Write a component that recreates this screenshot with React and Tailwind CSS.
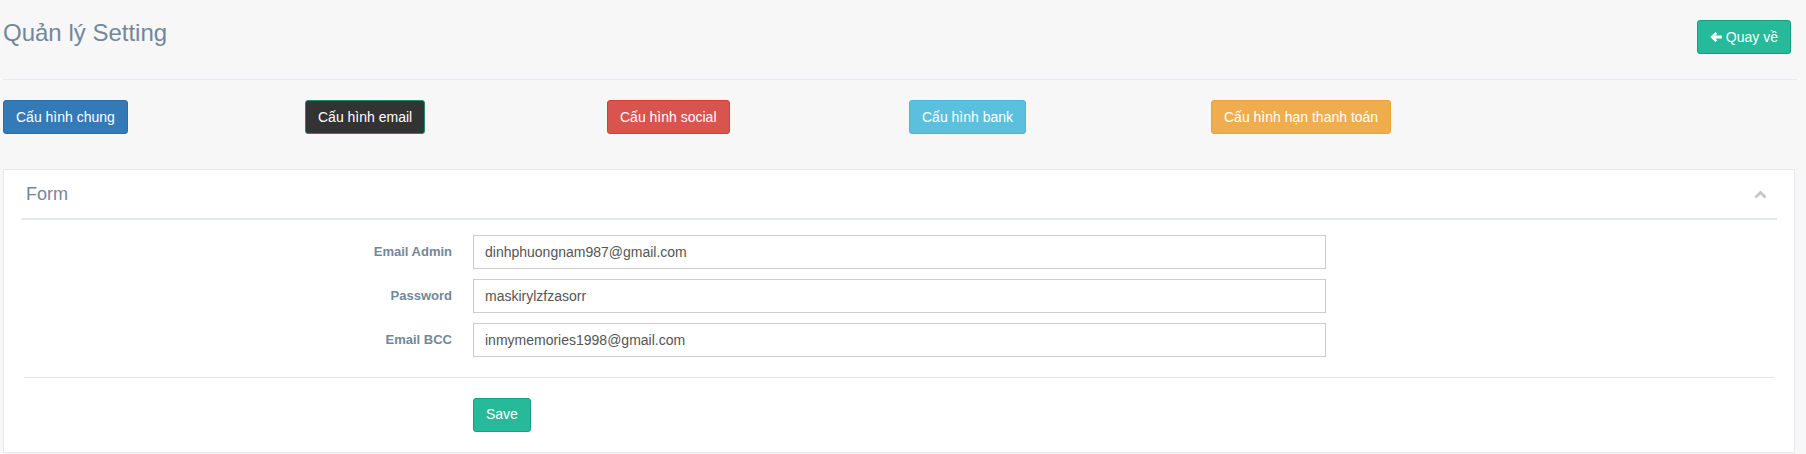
export default function App() {
  const tabs = [
    { label: "Cấu hình chung", cls: "bg-[#337ab7] border-[#2e6da4]" },
    { label: "Cấu hình email", cls: "bg-[#333333] border-[#1e8a70]" },
    { label: "Cấu hình social", cls: "bg-[#d9534f] border-[#d43f3a]" },
    { label: "Cấu hình bank", cls: "bg-[#5bc0de] border-[#46b8da]" },
    { label: "Cấu hình hạn thanh toán", cls: "bg-[#f0ad4e] border-[#eea236]" },
  ];

  const fields = [
    { label: "Email Admin", value: "dinhphuongnam987@gmail.com" },
    { label: "Password", value: "maskirylzfzasorr" },
    { label: "Email BCC", value: "inmymemories1998@gmail.com" },
  ];

  return (
    <div className="min-h-[454px] w-full bg-[#F7F7F7] font-['Liberation_Sans',Arial,sans-serif] text-[#73879C]">
      {/* page title */}
      <div className="flex h-[79px] items-start justify-between pl-[3px] pr-[15px]">
        <h3 className="mt-[20px] text-[24px] leading-[26.4px] text-[#73879C]">Quản lý Setting</h3>
        <button className="mt-[20px] flex h-[34px] items-center gap-[4px] rounded-[3px] border border-[#169F85] bg-[#26B99A] px-[12px] text-[14px] text-white">
          <svg width="12" height="12" viewBox="0 0 12 12" fill="currentColor">
            <path d="M0.3 6 L5.4 0.9 L7.3 2.8 L5.3 4.6 H11.8 V7.4 H5.3 L7.3 9.2 L5.4 11.1 Z" />
          </svg>
          Quay về
        </button>
      </div>
      <div className="ml-[3px] mr-[9px] h-px bg-[#E6E9ED]" />

      {/* tabs */}
      <div className="mt-[20px] grid grid-cols-[repeat(6,302px)] pl-[3px]">
        {tabs.map((t) => (
          <div key={t.label}>
            <button className={`h-[34px] rounded-[3px] border px-[12px] text-[14px] text-white ${t.cls}`}>
              {t.label}
            </button>
          </div>
        ))}
      </div>

      {/* panel */}
      <div className="ml-[3px] mt-[35px] h-[284px] w-[1792px] border border-[#E6E9ED] bg-white px-[17px]">
        <div className="flex items-center justify-between border-b-2 border-[#E6E9ED] pb-[13px] pl-[5px] pt-[15px]">
          <h2 className="text-[18px] leading-[19.8px] text-[#73879C]">Form</h2>
          <svg className="mr-[10px]" width="13" height="9" viewBox="0 0 13 9" fill="none" stroke="#C5C7CB" strokeWidth="2.8">
            <path d="M1.5 7.5 L6.5 2.5 L11.5 7.5" />
          </svg>
        </div>

        <div className="flex flex-col gap-[10px] pt-[15px]">
          {fields.map((f) => (
            <div key={f.label} className="flex items-center">
              <label className="w-[431px] text-right text-[13px] font-bold text-[#73879C]">{f.label}</label>
              <input
                className="ml-[21px] h-[34px] w-[853px] border border-[#ccc] bg-white px-[11px] text-[14px] text-[#555] outline-none"
                defaultValue={f.value}
                readOnly
              />
            </div>
          ))}
        </div>

        <div className="ml-[4px] mr-[3px] mt-[20px] h-px bg-[#E5E5E5]" />

        <div className="mt-[20px] pl-[452px]">
          <button className="h-[34px] rounded-[3px] border border-[#169F85] bg-[#26B99A] px-[12px] text-[14px] text-white">
            Save
          </button>
        </div>
      </div>
    </div>
  );
}
